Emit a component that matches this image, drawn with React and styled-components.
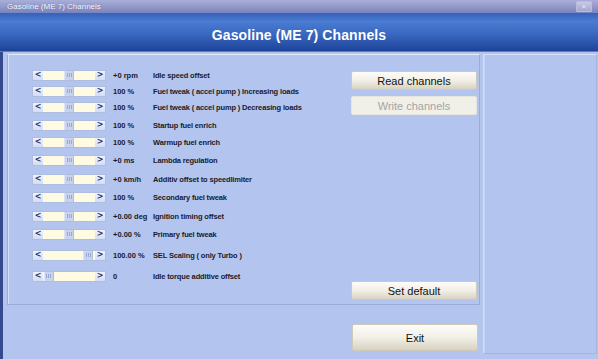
import React from "react";
import styled, { createGlobalStyle } from "styled-components";

const GlobalStyle = createGlobalStyle`
  html, body {
    margin: 0;
    padding: 0;
    background: #b3c5ef;
  }
  body {
    font-family: "Liberation Sans", Arial, sans-serif;
  }
`;

const Window = styled.div`
  width: 598px;
  height: 359px;
  display: flex;
  flex-direction: column;
  overflow: hidden;
  background: #b3c5ef;
`;

const TitleBar = styled.div`
  height: 13px;
  flex: none;
  display: flex;
  align-items: center;
  justify-content: space-between;
  padding: 0 6px 0 7px;
  background: linear-gradient(to bottom, #a9aed9 0%, #9097c8 55%, #7a82bb 100%);
  color: #fff;
  font-size: 8px;
  text-shadow: 0 0 1px rgba(40, 50, 110, 0.6);
`;

const CloseButton = styled.div`
  width: 14px;
  height: 9px;
  display: flex;
  align-items: center;
  justify-content: center;
  background: linear-gradient(to bottom, #c7cae6, #a3a8d2);
  border: 1px solid #b9bde0;
  border-radius: 1px;
  font-size: 7px;
  line-height: 1;
  color: #fff;
`;

const Header = styled.div`
  height: 39px;
  flex: none;
  display: flex;
  align-items: center;
  justify-content: center;
  padding-top: 5px;
  box-sizing: border-box;
  background: linear-gradient(to bottom, #3561bb 0%, #4a7cd2 22%, #3a68c0 55%, #1d4398 100%);
  border-bottom: 1px solid #5a7cc4;
  color: #fff;
  font-size: 14px;
  font-weight: bold;
  letter-spacing: 0.1px;
`;

const Body = styled.div`
  flex: 1;
  display: flex;
  gap: 3px;
  padding: 2px 1px 5px 4px;
  border-left: 3px solid #34498e;
  min-height: 0;
`;

const LeftColumn = styled.div`
  width: 473px;
  display: flex;
  flex-direction: column;
`;

const GroupPanel = styled.div`
  height: 251px;
  box-sizing: border-box;
  display: flex;
  justify-content: space-between;
  border: 1px solid #9badd6;
  border-top-color: #e4ebfb;
  box-shadow: inset 1px 0 0 #d6e0f8;
  padding: 0 2px 0 24px;
`;

const Rows = styled.div`
  display: flex;
  flex-direction: column;
  padding-top: 15px;
`;

const Row = styled.div`
  display: flex;
  align-items: center;
  height: 10px;
  margin-top: ${p => p.$space}px;
`;

const ScrollBar = styled.div`
  width: 74px;
  height: 11px;
  display: flex;
  box-sizing: border-box;
  border: 1px solid #aebde0;
  background: #fffae2;
`;

const ArrowButton = styled.div`
  width: 10px;
  flex: none;
  display: flex;
  align-items: center;
  justify-content: center;
  background: linear-gradient(to bottom, #eef2fb, #d3ddf3);
  color: #1e2c6a;
  font-family: "DejaVu Sans", sans-serif;
  font-size: 8px;
  font-weight: bold;
  line-height: 1;
`;

const Spacer = styled.div`
  flex: ${p => p.$grow};
`;

const Thumb = styled.div`
  width: 10px;
  flex: none;
  height: 100%;
  background: #c9d3ee;
  border-left: 1px solid #dde4f6;
  border-right: 1px solid #aebde0;
  box-sizing: border-box;
  display: flex;
  align-items: center;
  justify-content: center;

  &::after {
    content: "";
    width: 5px;
    height: 4px;
    background: repeating-linear-gradient(to right, #98a8d4 0 1px, transparent 1px 2px);
  }
`;

const Value = styled.div`
  width: 40px;
  margin-left: 7px;
  font-size: 7.5px;
  font-weight: bold;
  color: #1a1a2a;
  white-space: nowrap;
`;

const Label = styled.div`
  font-size: 7.5px;
  font-weight: bold;
  color: #1a1a2a;
  letter-spacing: -0.15px;
  white-space: nowrap;
`;

const ButtonColumn = styled.div`
  width: 126px;
  display: flex;
  flex-direction: column;
  padding-top: 16px;
  gap: 6px;
`;

const Button = styled.div`
  height: ${p => p.$h || 19}px;
  box-sizing: border-box;
  display: flex;
  align-items: center;
  justify-content: center;
  border: 1px solid ${p => (p.$disabled ? "#e8e6dc" : "#cfcab8")};
  border-radius: 2px;
  background: ${p =>
    p.$disabled
      ? "#f1f0e8"
      : "linear-gradient(to bottom, #fdfcf8 0%, #f2efe6 50%, #d8d2c2 100%)"};
  color: ${p => (p.$disabled ? "#a4a4a4" : "#111")};
  font-size: 11px;
  margin-top: ${p => p.$top || 0}px;
`;

const ExitRow = styled.div`
  display: flex;
  justify-content: flex-end;
  padding: 19px 2px 0 0;
`;

const ExitButton = styled(Button)`
  width: 126px;
`;

const RightPanel = styled.div`
  flex: 1;
  box-sizing: border-box;
  border: 1px solid #a4b5dc;
  border-top-color: #d7e1f8;
  border-left-color: #d2dcf5;
  box-shadow: inset 1px 0 0 #c5d2f2;
`;

const channels = [
  { value: "+0 rpm", label: "Idle speed offset", pos: 50, space: 0 },
  { value: "100 %", label: "Fuel tweak ( accel pump ) Increasing loads", pos: 50, space: 6 },
  { value: "100 %", label: "Fuel tweak ( accel pump ) Decreasing loads", pos: 50, space: 6 },
  { value: "100 %", label: "Startup fuel enrich", pos: 50, space: 8 },
  { value: "100 %", label: "Warmup fuel enrich", pos: 50, space: 7 },
  { value: "+0 ms", label: "Lambda regulation", pos: 50, space: 8 },
  { value: "+0 km/h", label: "Additiv offset to speedlimiter", pos: 50, space: 9 },
  { value: "100 %", label: "Secondary fuel tweak", pos: 50, space: 8 },
  { value: "+0.00 deg", label: "Ignition timing offset", pos: 50, space: 9 },
  { value: "+0.00 %", label: "Primary fuel tweak", pos: 50, space: 8 },
  { value: "100.00 %", label: "SEL Scaling ( only Turbo )", pos: 96, space: 11 },
  { value: "0", label: "Idle torque additive offset", pos: 2, space: 11 },
];

export default function App() {
  return (
    <>
      <GlobalStyle />
      <Window>
        <TitleBar>
          <span>Gasoline (ME 7) Channels</span>
          <CloseButton>✕</CloseButton>
        </TitleBar>
        <Header>Gasoline (ME 7) Channels</Header>
        <Body>
          <LeftColumn>
            <GroupPanel>
              <Rows>
                {channels.map(c => (
                  <Row key={c.label} $space={c.space}>
                    <ScrollBar>
                      <ArrowButton>&lt;</ArrowButton>
                      <Spacer $grow={c.pos} />
                      <Thumb />
                      <Spacer $grow={100 - c.pos} />
                      <ArrowButton>&gt;</ArrowButton>
                    </ScrollBar>
                    <Value>{c.value}</Value>
                    <Label>{c.label}</Label>
                  </Row>
                ))}
              </Rows>
              <ButtonColumn>
                <Button>Read channels</Button>
                <Button $disabled>Write channels</Button>
                <Button $top={160}>Set default</Button>
              </ButtonColumn>
            </GroupPanel>
            <ExitRow>
              <ExitButton $h={27}>Exit</ExitButton>
            </ExitRow>
          </LeftColumn>
          <RightPanel />
        </Body>
      </Window>
    </>
  );
}
